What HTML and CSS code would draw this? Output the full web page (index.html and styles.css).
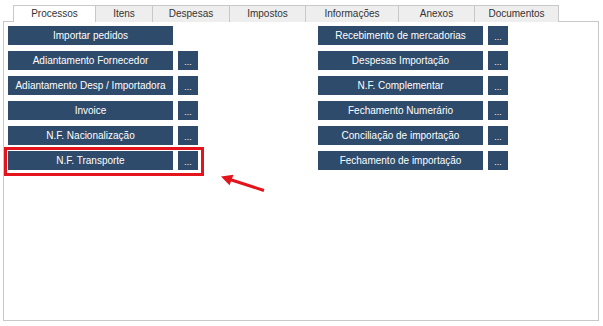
FILE: index.html
```html
<!DOCTYPE html>
<html lang="pt-BR">
<head>
    <meta charset="UTF-8">
    <title>Processos</title>
    <link rel="stylesheet" href="styles.css">
</head>
<body>
    <div class="window">
        <!-- Abas -->
        <ul class="tabs">
            <li class="tab active tab-processos">Processos</li>
            <li class="tab tab-itens">Itens</li>
            <li class="tab tab-despesas">Despesas</li>
            <li class="tab tab-impostos">Impostos</li>
            <li class="tab tab-info">Informações</li>
            <li class="tab tab-anexos">Anexos</li>
            <li class="tab tab-docs">Documentos</li>
        </ul>

        <!-- Conteudo da aba Processos -->
        <div class="panel">
            <div class="col">
                <div class="row"><button class="btn">Importar pedidos</button></div>
                <div class="row"><button class="btn">Adiantamento Fornecedor</button><button class="more">...</button></div>
                <div class="row"><button class="btn">Adiantamento Desp / Importadora</button><button class="more">...</button></div>
                <div class="row"><button class="btn">Invoice</button><button class="more">...</button></div>
                <div class="row"><button class="btn">N.F. Nacionalização</button><button class="more">...</button></div>
                <div class="row">
                    <button class="btn">N.F. Transporte</button><button class="more">...</button>
                    <span class="highlight"></span>
                </div>
            </div>
            <div class="col">
                <div class="row"><button class="btn">Recebimento de mercadorias</button><button class="more">...</button></div>
                <div class="row"><button class="btn">Despesas Importação</button><button class="more">...</button></div>
                <div class="row"><button class="btn">N.F. Complementar</button><button class="more">...</button></div>
                <div class="row"><button class="btn">Fechamento Numerário</button><button class="more">...</button></div>
                <div class="row"><button class="btn">Conciliação de importação</button><button class="more">...</button></div>
                <div class="row"><button class="btn">Fechamento de importação</button><button class="more">...</button></div>
            </div>
        </div>

        <!-- Seta de destaque -->
        <svg class="arrow" width="603" height="326" viewBox="0 0 603 326">
            <line x1="264" y1="190.5" x2="230" y2="179.5" stroke="#e3141b" stroke-width="3"/>
            <polygon points="221,176.5 233.5,174.8 229.5,185.2" fill="#e3141b"/>
        </svg>
    </div>
</body>
</html>
```

FILE: styles.css
```css
body {
    margin: 0;
    background-color: #fff;
    font-family: "Liberation Sans", Arial, sans-serif;
    font-size: 10px;
}

.window {
    position: relative;
    width: 603px;
    height: 326px;
    padding-top: 5px;
    box-sizing: border-box;
}

.tabs {
    display: flex;
    list-style: none;
    margin: 0 0 -1px 13px;
    padding: 0;
}

.tab {
    height: 17px;
    box-sizing: border-box;
    border-top: 1px solid #c8c8c8;
    border-left: 1px solid #c8c8c8;
    background-color: #eeeeee;
    color: #333;
    text-align: center;
    line-height: 15px;
}

.tab.active {
    position: relative;
    z-index: 1;
    background-color: #fff;
}

.tab-processos { width: 82px; }
.tab-itens { width: 57px; }
.tab-despesas { width: 77px; }
.tab-impostos { width: 76px; }
.tab-info { width: 93px; }
.tab-anexos { width: 76px; }
.tab-docs { width: 85px; border-right: 1px solid #c8c8c8; }

.panel {
    display: flex;
    gap: 120px;
    margin-left: 3px;
    width: 596px;
    height: 300px;
    box-sizing: border-box;
    padding: 4px 4px;
    border: 1px solid #c8c8c8;
}

.row {
    position: relative;
    display: flex;
    gap: 5px;
    height: 19px;
    margin-bottom: 6px;
}

.btn,
.more {
    height: 19px;
    padding: 0;
    border: none;
    background-color: #2e4b6c;
    color: #fff;
    font-family: "Liberation Sans", Arial, sans-serif;
    font-size: 10px;
    white-space: nowrap;
}

.btn {
    width: 165px;
}

.more {
    width: 20px;
    font-size: 9px;
    padding-top: 2px;
}

.highlight {
    position: absolute;
    left: -4px;
    top: -4px;
    width: 200px;
    height: 29px;
    box-sizing: border-box;
    border: 3px solid #e3141b;
}

.arrow {
    position: absolute;
    left: 0;
    top: 0;
    pointer-events: none;
}
```
